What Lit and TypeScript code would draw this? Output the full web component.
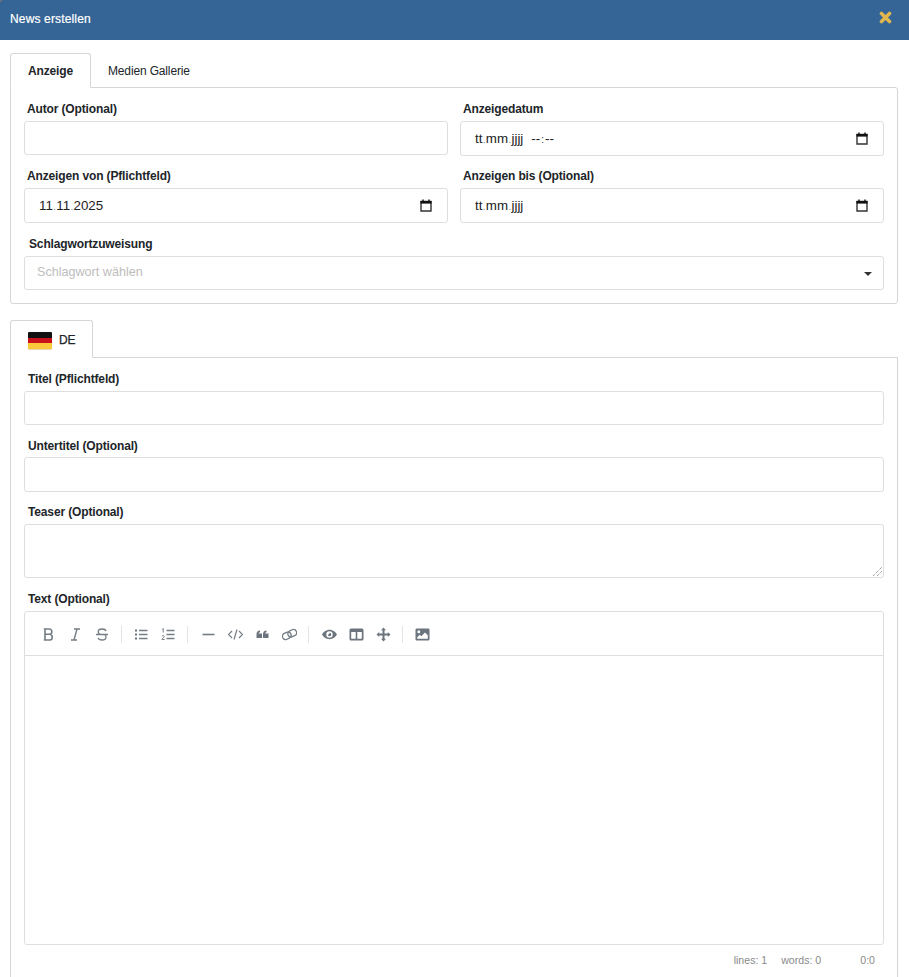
import { LitElement, html, css, svg } from "lit";
import { customElement } from "lit/decorators.js";

const calendar = html`<svg class="cal" viewBox="0 0 12 13" width="12" height="13">
  <path d="M1 2.5h10v9.5H1z" fill="none" stroke="#333" stroke-width="1.4"/>
  <path d="M0.5 2h11v2.6H.5z" fill="#111"/>
  <path d="M3 .5v2M9 .5v2" stroke="#111" stroke-width="1.4"/>
</svg>`;

const icons: Record<string, any> = {
  bold: svg`<path d="M4 2h4.2a2.6 2.6 0 0 1 0 5.3H4zM4 7.3h4.9a2.9 2.9 0 0 1 0 5.7H4zM2.8 2H4M2.8 13H4" fill="none" stroke-width="1.6"/>`,
  italic: svg`<path d="M6 2h6M3 13h6M9 2L6 13" fill="none" stroke-width="1.4"/>`,
  strike: svg`<path d="M1 7.5h12M11 4c-.6-1.4-2-2-4-2-2.300 0-3.800 1-3.800 2.700 0 1 .5 1.800 1.600 2.300M3 11c.6 1.400 2 2 4 2 2.400 0 4-1 4-2.800 0-.9-.3-1.700-1-2.200" fill="none" stroke-width="1.3"/>`,
  ul: svg`<path d="M5 3.500h8.500M5 7.500h8.500M5 11.500h8.500" fill="none" stroke-width="1.500"/><path d="M1 2.500h2v2H1zM1 6.500h2v2H1zM1 10.500h2v2H1z" stroke="none" fill="#6c757d"/>`,
  ol: svg`<path d="M5.500 3.500h8M5.500 7.500h8M5.500 11.500h8" fill="none" stroke-width="1.500"/><path d="M2.200 1.500v4M1.300 2.300l1-.8M1 9.300c.3-1 2.500-1 2.300.3 0 .7-2.300 1.500-2.300 2.900h2.500" fill="none" stroke-width="1"/>`,
  minus: svg`<path d="M1.500 7.500h12" fill="none" stroke-width="1.600"/>`,
  code: svg`<path d="M4.500 4L1 7.500 4.500 11M11.500 4L15 7.500 11.500 11M9.500 2.500l-3 10" fill="none" stroke-width="1.200" transform="translate(-.5 0)"/>`,
  quote: svg`<path stroke="none" fill="#6c757d" d="M1.500 7c0-2 1.300-3.300 3.500-3.500v1.800c-1 .1-1.500.6-1.500 1.200H7v4.500H1.500zM8 7c0-2 1.300-3.300 3.500-3.500v1.800c-1 .1-1.500.6-1.500 1.200h3.500v4.500H8z"/>`,
  link: svg`<g fill="none" stroke-width="1.300" transform="rotate(-25 7.500 7.500)"><rect x="0" y="4.300" width="9" height="6.400" rx="3.200"/><rect x="6" y="4.300" width="9" height="6.400" rx="3.200"/></g>`,
  eye: svg`<path fill-rule="evenodd" stroke="none" fill="#6c757d" d="M7.500 2.800C11 2.800 13.800 5.400 15 7.500 13.800 9.600 11 12.200 7.500 12.200S1.200 9.600 0 7.500C1.200 5.400 4 2.800 7.500 2.800zM7.500 4.300a3.200 3.200 0 1 0 0 6.400 3.200 3.200 0 0 0 0-6.400zM7.500 5.700a1.800 1.800 0 1 1-1.800 1.800c.5.300 1.800-.3 1.800-1.800z"/>`,
  columns: svg`<path fill-rule="evenodd" stroke="none" fill="#6c757d" d="M2 1.500h11a1.500 1.500 0 0 1 1.500 1.500v9a1.500 1.500 0 0 1-1.500 1.500H2A1.500 1.500 0 0 1 .5 12V3A1.500 1.500 0 0 1 2 1.500zM2.200 5v6.800h4.500V5zM8.300 5v6.800h4.500V5z"/>`,
  move: svg`<path stroke="none" fill="#6c757d" d="M7.500.5l2.500 2.700H8.500v3.300h3.300V5l2.700 2.500-2.700 2.500V8.500H8.500v3.300H10l-2.500 2.700L5 11.800h1.500V8.500H3.200V10L.5 7.500 3.200 5v1.500h3.300V3.200H5z"/>`,
  image: svg`<path fill-rule="evenodd" stroke="none" fill="#6c757d" d="M1.800 1.500h11.400A1.300 1.300 0 0 1 14.500 2.800v9.400a1.300 1.300 0 0 1-1.300 1.300H1.800A1.300 1.300 0 0 1 .5 12.200V2.800A1.300 1.300 0 0 1 1.800 1.500zM3.800 3.200a1.500 1.500 0 1 0 0 3 1.500 1.500 0 0 0 0-3zM2.200 11.700h10.600V8.300L10 5.500 6.300 9.200 4.800 7.700 2.200 10.300z"/>`,
};

const groups = [
  ["bold", "italic", "strike"],
  ["ul", "ol"],
  ["minus", "code", "quote", "link"],
  ["eye", "columns", "move"],
  ["image"],
];

@customElement("app-root")
export class AppRoot extends LitElement {
  static styles = css`
    :host {
      display: block;
      width: 909px;
      height: 977px;
      overflow: hidden;
      background: #fff;
      font-family: "Liberation Sans", Arial, sans-serif;
      color: #212529;
    }
    .headwrap { background: #777; }
    .header {
      height: 40px;
      box-sizing: border-box;
      background: #356596;
      color: #fff;
      display: flex;
      align-items: center;
      justify-content: space-between;
      padding: 0 17px 2px 10px;
      font-size: 12px;
      border-top-left-radius: 4px;
    }
    .title { letter-spacing: 0.15px; -webkit-text-stroke: 0.2px #fff; }
    .close { display: block; margin-bottom: 3px; }
    .body { padding: 13px 11px 0 10px; }
    .tabs { display: flex; position: relative; z-index: 1; margin-bottom: -1px; }
    .tab {
      box-sizing: border-box;
      height: 35px;
      padding: 0 17px 0 16px;
      display: flex;
      align-items: center;
      font-size: 12px;
      letter-spacing: -0.15px;
      color: #212529;
      border: 1px solid transparent;
    }
    .tab.active {
      width: 81px;
      padding-left: 17px;
      font-weight: bold;
      background: #fff;
      border-color: #d6d6d6;
      border-bottom-color: #fff;
      border-radius: 3px 3px 0 0;
    }
    .tab.lang {
      width: 83px;
      height: 38px;
      gap: 7px;
      padding: 2px 0 0 17px;
      font-size: 12px;
      font-weight: normal;
      letter-spacing: -0.2px;
    }
    .lang-name { -webkit-text-stroke: 0.25px #212529; }
    .flag {
      width: 24px;
      height: 17px;
      border-radius: 1px;
      background: linear-gradient(#111 0 33.3%, #c8121b 33.3% 62%, #fcc93b 62% 100%);
      box-shadow: 0 1px 1px rgba(200, 160, 70, 0.45);
    }
    .panel {
      border: 1px solid #d6d6d6;
      border-radius: 0 3px 3px 3px;
      padding: 0 13px;
    }
    .panel.top { height: 217px; box-sizing: border-box; margin-bottom: 16px; padding-top: 13px; }
    .panel.lang { height: 640px; box-sizing: border-box; padding-top: 13px; border-bottom: none; border-radius: 0; }
    .grid {
      display: grid;
      grid-template-columns: 424px 424px;
      column-gap: 12px;
    }
    .field { display: flex; flex-direction: column; }
    label {
      display: block;
      height: 20px;
      line-height: 16px;
      font-size: 12px;
      font-weight: bold;
      letter-spacing: -0.14px;
      padding-left: 3px;
    }
    .lang label { padding-left: 4px; }
    .lang label.low { line-height: 18px; }
    .control {
      box-sizing: border-box;
      height: 34px;
      border: 1px solid #dedede;
      border-radius: 3px;
      background: #fff;
    }
    .tall { height: 35px; }
    .date {
      height: 35px;
      display: flex;
      align-items: center;
      justify-content: space-between;
      padding: 0 15px 0 14px;
      font-size: 13.33px;
      color: #222;
    }
    .segs { display: flex; align-items: baseline; }
    .sep { font-size: 8px; margin: 0 0.6px; color: #333; }
    .colon { font-size: 10px; margin: 0 1px; color: #333; }
    .gap { width: 8px; }
    .cal { display: block; }
    .r1 { margin-bottom: 12px; }
    .select {
      display: flex;
      align-items: center;
      justify-content: space-between;
      padding: 0 11px 2px 12px;
      font-size: 12.6px;
      color: #bdbdbd;
    }
    .caret {
      width: 0;
      height: 0;
      border-left: 4px solid transparent;
      border-right: 4px solid transparent;
      border-top: 4px solid #333;
      margin-top: 3px;
    }
    .schlag { padding-left: 5px; margin-top: 13px; }
    .stack { display: flex; flex-direction: column; }
    .mt { margin-top: 12px; }
    .mt2 { margin-top: 13px; }
    .teaser { height: 54px; position: relative; }
    .grip { position: absolute; right: 0; bottom: 0; display: block; }
    .editor {
      box-sizing: border-box;
      height: 334px;
      border: 1px solid #dedede;
      border-radius: 3px;
    }
    .toolbar {
      box-sizing: border-box;
      height: 44px;
      border-bottom: 1px solid #dedede;
      padding: 2px 0 0 9.5px;
      display: flex;
      align-items: center;
    }
    .btn { width: 27px; display: flex; justify-content: center; }
    .btn svg { display: block; stroke: #747d85; }
    .tsep { width: 12.7px; height: 17px; display: flex; padding-left: 5px; box-sizing: border-box; }
    .tsep::before { content: ""; width: 1px; background: #e4e4e4; }
    .status {
      display: flex;
      justify-content: flex-end;
      font-size: 10.6px;
      color: #8a8a8a;
      padding: 9px 9px 0 0;
    }
    .status span { margin-left: 14px; }
    .status .pos { margin-left: 39px; }
  `;

  private date(parts: string[], time = false) {
    return html`<div class="control date">
      <div class="segs">
        ${parts.map((p, i) => html`${i ? html`<span class="sep">.</span>` : ""}<span>${p}</span>`)}
        ${time ? html`<span class="gap"></span><span>--</span><span class="colon">:</span><span>--</span>` : ""}
      </div>
      ${calendar}
    </div>`;
  }

  render() {
    return html`
      <div class="headwrap">
        <div class="header">
          <span class="title">News erstellen</span>
          <svg class="close" width="13" height="13" viewBox="0 0 13 13">
            <path d="M2.500 2.500l8 8M10.500 2.500l-8 8" stroke="#e0b74f" stroke-width="3.600" stroke-linecap="round" />
          </svg>
        </div>
      </div>
      <div class="body">
        <div class="tabs">
          <div class="tab active">Anzeige</div>
          <div class="tab">Medien Gallerie</div>
        </div>
        <div class="panel top">
          <div class="grid">
            <div class="field r1">
              <label>Autor (Optional)</label>
              <div class="control"></div>
            </div>
            <div class="field r1">
              <label>Anzeigedatum</label>
              ${this.date(["tt", "mm", "jjjj"], true)}
            </div>
            <div class="field">
              <label>Anzeigen von (Pflichtfeld)</label>
              ${this.date(["11", "11", "2025"])}
            </div>
            <div class="field">
              <label>Anzeigen bis (Optional)</label>
              ${this.date(["tt", "mm", "jjjj"])}
            </div>
          </div>
          <div class="field">
            <label class="schlag">Schlagwortzuweisung</label>
            <div class="control select"><span>Schlagwort wählen</span><span class="caret"></span></div>
          </div>
        </div>
        <div class="tabs">
          <div class="tab active lang"><span class="flag"></span><span class="lang-name">DE</span></div>
        </div>
        <div class="panel lang">
          <div class="stack">
            <div class="field"><label>Titel (Pflichtfeld)</label><div class="control"></div></div>
            <div class="field mt"><label class="low">Untertitel (Optional)</label><div class="control tall"></div></div>
            <div class="field mt"><label>Teaser (Optional)</label>
              <div class="control teaser">
                <svg class="grip" width="11" height="11" viewBox="0 0 11 11">
                  <path d="M1 10L10 1M5 10l5-5" stroke="#777" stroke-width="1" stroke-dasharray="1 1" />
                </svg>
              </div>
            </div>
            <div class="field mt2"><label>Text (Optional)</label>
              <div class="editor">
                <div class="toolbar">
                  ${groups.map(
                    (g, i) => html`${i ? html`<span class="tsep"></span>` : ""}${g.map(
                      (n) => html`<span class="btn"><svg width="15" height="15" viewBox="0 0 15 15">${icons[n]}</svg></span>`
                    )}`
                  )}
                </div>
              </div>
              <div class="status"><span>lines: 1</span><span>words: 0</span><span class="pos">0:0</span></div>
            </div>
          </div>
        </div>
      </div>
    `;
  }
}
